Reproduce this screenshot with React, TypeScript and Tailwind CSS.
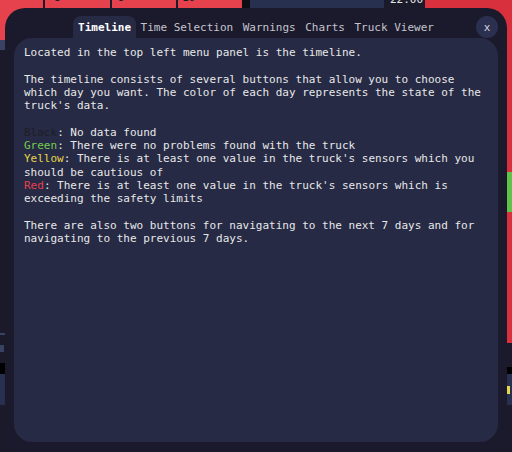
import React from "react";

const mono = { fontFamily: '"DejaVu Sans Mono", "Liberation Mono", monospace' };

function Background() {
  return (
    <div className="flex flex-col w-[512px] h-[452px] bg-[#1b1a2b]">
      <div className="flex h-[40px] shrink-0">
        <div className="flex w-[242px] gap-[2px] bg-[#1b1a2b]">
          <div className="w-[43px] bg-[#e5424d]" />
          <div className="w-[65px] bg-[#e5424d] pl-[9px] text-[11px] leading-[11px] text-[#1b1a2b]" style={mono}>
            <div className="-mt-[8px]">8</div>
          </div>
          <div className="w-[64px] bg-[#e5424d] pl-[6px] text-[11px] leading-[11px] text-[#1b1a2b]" style={mono}>
            <div className="-mt-[8px]">9</div>
          </div>
          <div className="flex-1 bg-[#e5424d] pl-[4px] text-[11px] leading-[11px] text-[#1b1a2b]" style={mono}>
            <div className="-mt-[8px]">10</div>
          </div>
        </div>
        <div className="w-[8px] bg-[#0d0d14]" />
        <div className="w-[134px] bg-[#283050]" />
        <div className="w-[41px] text-[11px] leading-[11px] text-[#e6e6e6] pl-[6px]" style={mono}>
          <div className="-mt-[6px]">22:00</div>
        </div>
        <div className="flex-1 bg-[#d9303d]" />
      </div>
      <div className="flex flex-1">
        <div className="w-[60px] flex flex-col">
          <div className="h-[10px] bg-[#3a4264]" />
          <div className="h-[283px]" />
          <div className="h-[2px] bg-[#3a4264]" />
          <div className="h-[10px]" />
          <div className="h-[7px] w-[4px] bg-[#3a4264]" />
          <div className="h-[11px]" />
          <div className="h-[11px] bg-black" />
          <div className="h-[31px] bg-[#283050] flex items-center justify-end pr-[52px]">
            <div className="w-[3px] h-[8px] bg-[#e8404c]" />
          </div>
        </div>
        <div className="flex-1" />
        <div className="w-[60px] flex flex-col">
          <div className="h-[303px] bg-[#d9303d] flex flex-col justify-center items-end">
            <div className="w-[20px] h-[40px] bg-[#5fc24a]" />
          </div>
          <div className="h-[24px]" />
          <div className="h-[7px] bg-black" />
          <div className="h-[31px] bg-[#283050] flex items-center pl-[55px]">
            <div className="w-[3px] h-[8px] bg-[#e6d64c]" />
          </div>
        </div>
      </div>
    </div>
  );
}

function Tab({ label, active }: { label: string; active?: boolean }) {
  return (
    <div
      className={
        active
          ? "h-[22px] px-[4.75px] flex items-center rounded-t-[8px] bg-[#262a44] text-white font-bold"
          : "h-[22px] px-[4.75px] flex items-center text-[#c4c4cc]"
      }
    >
      {label}
    </div>
  );
}

export default function App() {
  return (
    <div className="relative w-[512px] h-[452px] overflow-hidden">
      <Background />
      <div className="absolute inset-0 flex justify-center pt-[8px]">
        <div className="w-[502px] h-[452px] bg-[#1b1a2c] rounded-[20px] px-[9px] pt-[8px] pb-[18px] flex flex-col" style={mono}>
          <div className="relative flex justify-center h-[22px] text-[11px] leading-[13px] shrink-0">
            <Tab label="Timeline" active />
            <Tab label="Time Selection" />
            <Tab label="Warnings" />
            <Tab label="Charts" />
            <Tab label="Truck Viewer" />
            <div className="absolute right-0 top-0 w-[22px] h-[22px] rounded-full bg-[#2c3050] flex items-center justify-center text-[11px] text-[#d8d8e0]">
              x
            </div>
          </div>
          <div className="flex-1 bg-[#262a44] rounded-[18px] px-[10px] pt-[8px] text-[11px] leading-[13.3px] text-[#e8e8e8] whitespace-pre-wrap">
            <div>Located in the top left menu panel is the timeline.</div>
            <div>{"\u00a0"}</div>
            <div>The timeline consists of several buttons that allow you to choose which day you want. The color of each day represents the state of the truck's data.</div>
            <div>{"\u00a0"}</div>
            <div><span className="text-[#1e1e26]">Black</span>: No data found</div>
            <div><span className="text-[#76cc4c]">Green</span>: There were no problems found with the truck</div>
            <div><span className="text-[#e6d64c]">Yellow</span>: There is at least one value in the truck's sensors which you should be cautious of</div>
            <div><span className="text-[#e8404c]">Red</span>: There is at least one value in the truck's sensors which is exceeding the safety limits</div>
            <div>{"\u00a0"}</div>
            <div>There are also two buttons for navigating to the next 7 days and for navigating to the previous 7 days.</div>
          </div>
        </div>
      </div>
    </div>
  );
}
